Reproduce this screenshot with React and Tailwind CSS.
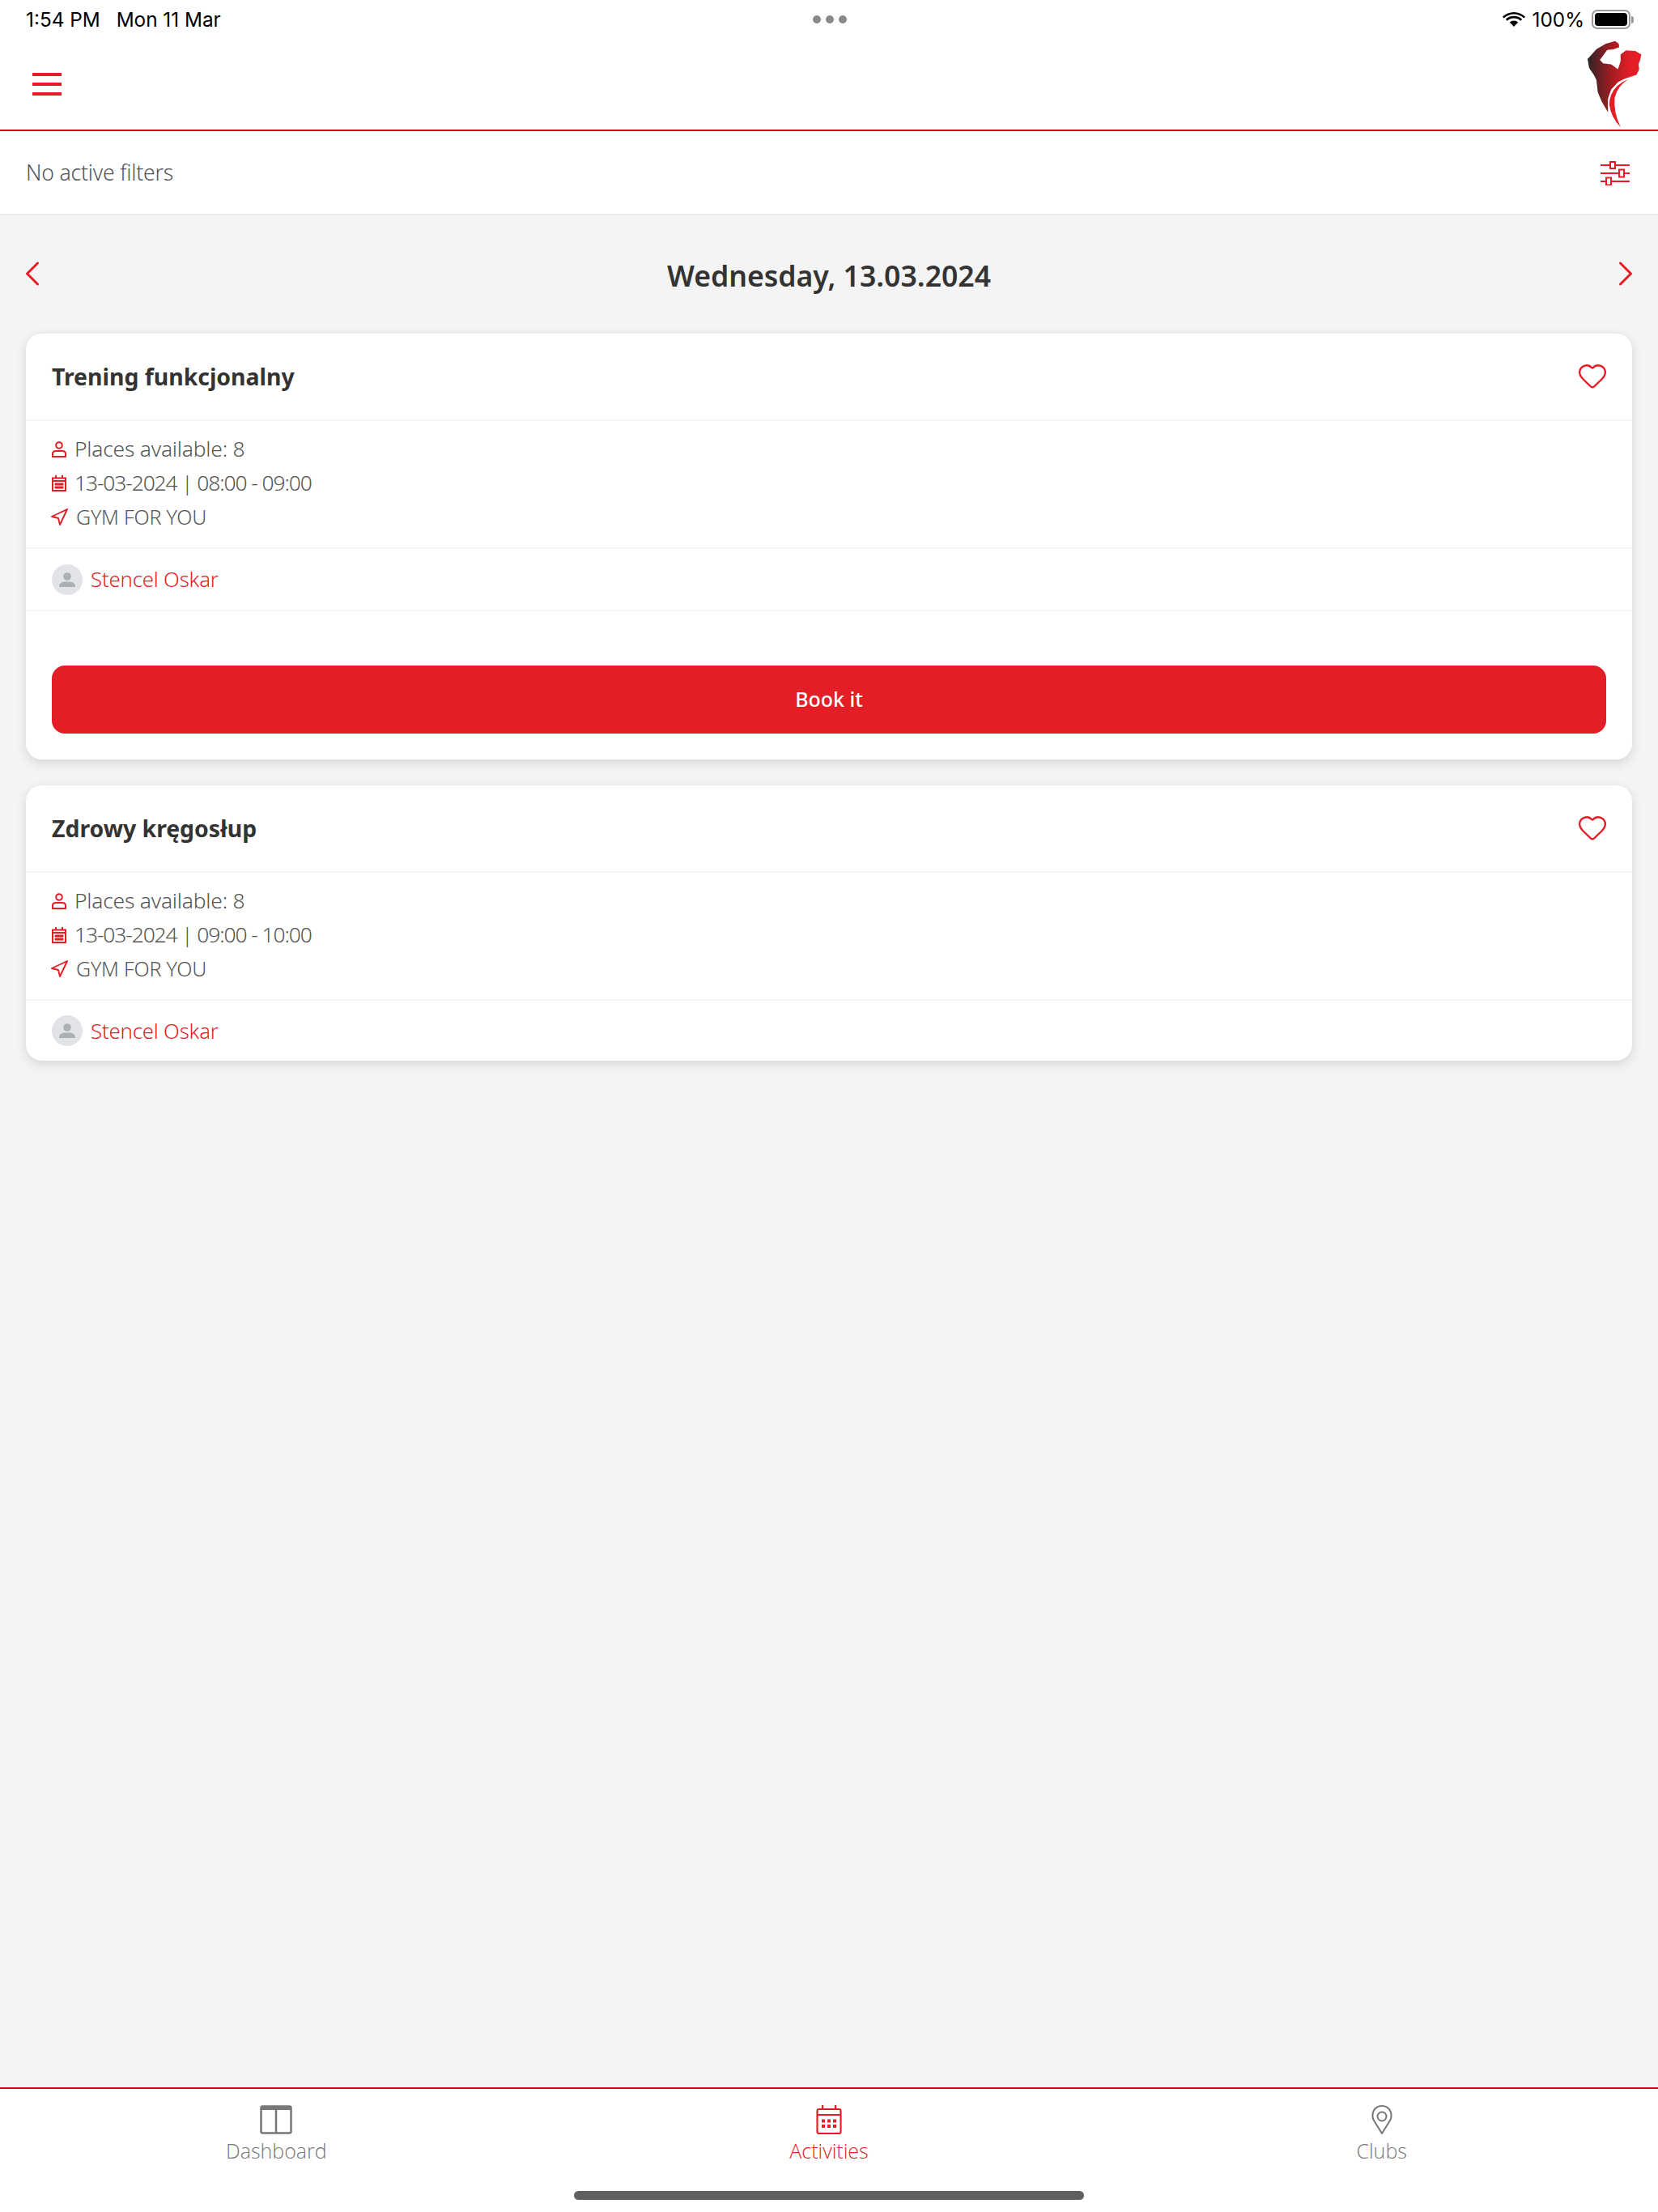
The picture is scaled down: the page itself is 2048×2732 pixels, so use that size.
import React from 'react';
import { ChevronLeft, ChevronRight, Heart, Navigation } from 'lucide-react';

const RED = '#e41e26';

const MenuIcon = () => (
  <div className="flex flex-col gap-[8px] w-[36px]">
    <div className="h-[4px] bg-[#e41e26]" />
    <div className="h-[4px] bg-[#e41e26]" />
    <div className="h-[4px] bg-[#e41e26]" />
  </div>
);

const Logo = () => (
  <svg viewBox="170 15 220 335" className="w-[73px] h-[112px] mt-[-3px]">
    <defs>
      <linearGradient id="logoGrad" x1="182" x2="340" y1="0" y2="0" gradientUnits="userSpaceOnUse">
        <stop offset="0" stopColor="#2c2426" />
        <stop offset="0.55" stopColor="#a01c22" />
        <stop offset="1" stopColor="#e41e26" />
      </linearGradient>
    </defs>
    <path
      fill="url(#logoGrad)"
      d="M182 92 L215 55 L250 35 L285 25 L298 35 L300 48 L280 55 L255 58 L228 95 L240 108 L270 112 L295 130 L305 100 L305 75 L325 60 L360 62 L382 75 L378 95 L372 110 L374 130 L365 150 L350 155 L320 165 L295 178 L270 205 L258 240 L258 290 L235 250 L220 215 L215 170 L205 150 L188 125 Z"
    />
    <path fill="#e41e26" d="M335 167 Q295 190 283 235 Q278 290 305 345 Q270 310 263 262 Q262 222 292 192 Q310 176 335 167 Z" />
  </svg>
);

const SlidersIcon = () => (
  <svg viewBox="0 0 36 30" className="w-[36px] h-[30px] mr-[3px] mt-[2px]" fill="none" stroke={RED} strokeWidth="2">
    <path d="M0 5h12M18 5h18M0 15h23M29 15h7M0 25h7M13 25h23" />
    <rect x="12" y="1" width="6" height="8" />
    <rect x="23" y="10.5" width="6" height="9" />
    <rect x="7" y="20.5" width="6" height="9" />
  </svg>
);

const PersonIcon = () => (
  <svg viewBox="0 0 18 20" className="w-[18px] h-[20px]" fill="none" stroke={RED} strokeWidth="2">
    <circle cx="9" cy="5" r="3.8" />
    <path d="M1 19v-3.5c0-2.2 1.8-3.5 4-3.5h8c2.2 0 4 1.3 4 3.5V19z" />
  </svg>
);

const CalendarSmall = () => (
  <svg viewBox="0 0 18 20" className="w-[18px] h-[20px]" fill="none" stroke={RED} strokeWidth="2">
    <path d="M1 3.5h16v15.500H1zM1 7h16M5 0v3M13 0v3" />
    <path d="M4 10h10v2H4zM4 14h10v2H4z" fill={RED} strokeWidth="1" />
  </svg>
);

const Avatar = () => (
  <div className="w-[38px] h-[38px] rounded-full bg-[#e1e3e6] flex items-center justify-center">
    <svg viewBox="0 0 20 20" className="w-[20px] h-[20px]" fill="#abb0b5">
      <circle cx="10" cy="6" r="4.8" />
      <path d="M0 19c0-4 2.500-6 6-6.500h8c3.500.5 6 2.500 6 6.500z" />
    </svg>
  </div>
);

const InfoRow = ({ icon, children, gap = 'gap-[10px]' }) => (
  <div className={`flex items-center h-[42px] ${gap}`}>
    <span className="flex w-[18px] justify-center shrink-0">{icon}</span>
    {children}
  </div>
);

const ActivityCard = ({ title, time, bookable }) => (
  <div className="bg-white rounded-[20px] shadow-[0_4px_14px_rgba(0,0,0,0.13)] overflow-hidden">
    <div className="h-[108px] px-[32px] flex items-center justify-between border-b-2 border-[#f6f6f6]">
      <h2 className="text-[28.4px] font-bold text-[#333333]">{title}</h2>
      <Heart className="w-[38px] h-[38px] text-[#e41e26] mr-[-2px] mt-[-3px]" strokeWidth={1.5} />
    </div>
    <div className="px-[32px] pt-[14px] h-[158px] border-b-2 border-[#f6f6f6] text-[#555555] font-[350]">
      <InfoRow icon={<PersonIcon />}>
        <span className="text-[26.4px] tracking-[-0.2px]">Places available: 8</span>
      </InfoRow>
      <InfoRow icon={<CalendarSmall />}>
        <span className="text-[26.4px] tracking-[-1.1px]">13-03-2024 | {time}</span>
      </InfoRow>
      <InfoRow icon={<Navigation className="w-[24px] h-[24px] text-[#e41e26] shrink-0" strokeWidth={1.9} />} gap="gap-[12px]">
        <span className="text-[25px] tracking-[-0.2px]">GYM FOR YOU</span>
      </InfoRow>
    </div>
    <div className={`px-[32px] flex items-center gap-[10px] ${bookable ? 'h-[77px] border-b-2 border-[#f6f6f6]' : 'h-[74px]'}`}>
      <Avatar />
      <span className="text-[25.8px] tracking-[-0.2px] text-[#e41e26] font-[350]">Stencel Oskar</span>
    </div>
    {bookable && (
      <div className="px-[32px] pt-[67px] pb-[32px]">
        <button className="w-full h-[84px] rounded-[16px] bg-[#e41e26] text-white text-[25px] font-medium">Book it</button>
      </div>
    )}
  </div>
);

const TabItem = ({ icon, label, active }) => (
  <div className={`flex-1 flex flex-col items-center pt-[18px] ${active ? 'text-[#e41e26]' : 'text-[#777777]'}`}>
    <div className="h-[40px] flex items-center">{icon}</div>
    <span className="text-[25px] leading-[34px] mt-[1px] font-['Open_Sans',sans-serif] font-light">{label}</span>
  </div>
);

const App = () => (
  <div className="w-[2048px] h-[2732px] bg-[#f4f4f4] flex flex-col overflow-hidden font-['Noto_Sans',sans-serif]">
    {/* header with status bar */}
    <div className="bg-white h-[162px] border-b-2 border-[#e00011] shrink-0">
      <div className="h-[48px] px-[32px] flex items-center justify-between text-[24.3px] text-black font-['Inter',sans-serif]">
        <div className="flex gap-[20px] w-[400px]">
          <span>1:54 PM</span>
          <span>Mon 11 Mar</span>
        </div>
        <div className="flex gap-[6px]">
          <span className="w-[10px] h-[10px] rounded-full bg-[#8a8a8a]" />
          <span className="w-[10px] h-[10px] rounded-full bg-[#8a8a8a]" />
          <span className="w-[10px] h-[10px] rounded-full bg-[#8a8a8a]" />
        </div>
        <div className="flex items-center justify-end gap-[9px] w-[400px] mr-[-2px]">
          <svg viewBox="0 0 28 20" className="w-[28px] h-[20px]" fill="black">
            <path d="M14 3C9 3 4.800 5 1.500 8L0 6.200C3.800 2.500 8.800.4 14 .4s10.200 2.100 14 5.800L26.500 8C23.200 5 19 3 14 3z" transform="translate(0 .5)" />
            <path d="M14 8.500c-3.200 0-6 1.200-8.200 3.200L3.800 9.700C6.500 7.200 10 5.700 14 5.700s7.500 1.500 10.200 4l-2 2C20 9.700 17.200 8.500 14 8.500z" />
            <path d="M14 11.500c-2 0-3.800.8-5.200 2L14 19l5.200-5.500c-1.400-1.200-3.200-2-5.200-2z" />
          </svg>
          <span>100%</span>
          <div className="flex items-center gap-[1px]">
            <div className="w-[48px] h-[24px] rounded-[7px] border-2 border-[#999999] p-[2px]">
              <div className="w-full h-full bg-black rounded-[4px]" />
            </div>
            <div className="w-[3px] h-[9px] bg-[#999999] rounded-r-full" />
          </div>
        </div>
      </div>
      <div className="h-[112px] pl-[40px] pr-[18px] flex items-center justify-between">
        <MenuIcon />
        <Logo />
      </div>
    </div>

    {/* filters */}
    <div className="bg-white h-[104px] border-b-2 border-[#ececec] px-[32px] flex items-center justify-between shrink-0">
      <span className="text-[26.6px] tracking-[-0.2px] text-[#555555] font-[350] mt-[2px]">No active filters</span>
      <SlidersIcon />
    </div>

    {/* date navigation */}
    <div className="h-[146px] px-[14px] flex items-center justify-between shrink-0 pb-[2px]">
      <ChevronLeft className="w-[52px] h-[52px] text-[#e41e26]" strokeWidth={1.4} />
      <span className="text-[35.6px] font-semibold text-[#333333] mt-[5px]">Wednesday, 13.03.2024</span>
      <ChevronRight className="w-[52px] h-[52px] text-[#e41e26]" strokeWidth={1.4} />
    </div>

    {/* list */}
    <main className="flex-1 px-[32px] flex flex-col gap-[32px]">
      <ActivityCard title="Trening funkcjonalny" time="08:00 - 09:00" bookable />
      <ActivityCard title="Zdrowy kręgosłup" time="09:00 - 10:00" />
    </main>

    {/* bottom tabs */}
    <footer className="h-[154px] bg-white border-t-2 border-[#d00a14] shrink-0 relative">
      <div className="flex">
        <TabItem
          label="Dashboard"
          icon={
            <svg viewBox="0 0 40 36" className="w-[40px] h-[36px]" fill="none" stroke="#777777" strokeWidth="2.500">
              <rect x="1.500" y="1.500" width="37" height="33" rx="2" />
              <path d="M20 2v33" />
              <path d="M1.500 3.500h37" strokeWidth="5" />
            </svg>
          }
        />
        <TabItem
          active
          label="Activities"
          icon={
            <svg viewBox="0 0 32 36" className="w-[32px] h-[36px]" fill="none" stroke={RED} strokeWidth="2.200">
              <rect x="1.500" y="5" width="29" height="30" rx="2" />
              <path d="M1.500 12h29M8 0v5M24 0v5" />
              <path d="M7 17.500h4v4H7zM14 17.500h4v4h-4zM21 17.500h4v4h-4zM7 24h4v4H7zM14 24h4v4h-4zM21 24h4v4h-4z" fill={RED} stroke="none" />
            </svg>
          }
        />
        <TabItem
          label="Clubs"
          icon={
            <svg viewBox="0 0 28 36" className="w-[28px] h-[36px]" fill="none" stroke="#777777" strokeWidth="2">
              <path d="M14 35 L3.500 18C1 12 3 1 14 1s13 11 10.500 17z" />
              <circle cx="14" cy="14" r="5.500" />
            </svg>
          }
        />
      </div>
      <div className="absolute left-[709px] top-[126px] w-[630px] h-[11px] rounded-full bg-[#5f5f5f]" />
    </footer>
  </div>
);

export default App;
